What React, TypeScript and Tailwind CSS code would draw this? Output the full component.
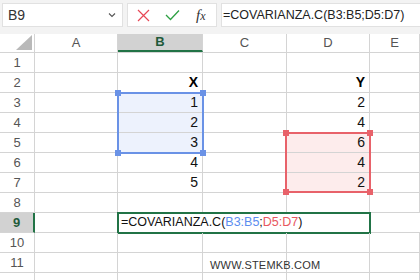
import React from "react";

const cols = ["A", "B", "C", "D", "E"];
const colW = ["w-[83px]", "w-[85px]", "w-[84px]", "w-[83px]", "w-[50px]"];

// cell values by row (1-based), index = column
const data: Record<number, (string | null)[]> = {
  2: [null, "X", null, "Y", null],
  3: [null, "1", null, "2", null],
  4: [null, "2", null, "4", null],
  5: [null, "3", null, "6", null],
  6: [null, "4", null, "4", null],
  7: [null, "5", null, "2", null],
};

const blueRows = [3, 4, 5];
const redRows = [5, 6, 7];

function Handle({ className }: { className: string }) {
  return <div className={"absolute w-[6px] h-[6px] " + className} />;
}

function Formula() {
  return (
    <span>
      =COVARIANZA.C(<span className="text-[#5b8def]">B3:B5</span>;
      <span className="text-[#e8575e]">D5:D7</span>)
    </span>
  );
}

export default function App() {
  const rows = Array.from({ length: 12 }, (_, i) => i + 1);

  return (
    <div className="relative w-[420px] h-[280px] overflow-hidden bg-white font-['Liberation_Sans',sans-serif] text-[#222]">
      {/* Formula bar */}
      <div className="flex h-[34px] items-start gap-[4px] bg-[#f3f3f3] pl-[2px] pt-[3px]">
        <div className="flex h-[24px] w-[121px] items-center justify-between border border-[#e1e1e1] bg-white pl-[5px] pr-[6px]">
          <span className="text-[14px] text-[#333]">B9</span>
          <svg width="8" height="6" viewBox="0 0 8 6" className="text-[#555]">
            <path d="M1 1.5 L4 4.5 L7 1.5" fill="none" stroke="currentColor" strokeWidth="1.1" />
          </svg>
        </div>
        <div className="flex h-[24px] w-[90px] items-center border border-[#e1e1e1] bg-white pl-[9px]">
          <svg width="13" height="13" viewBox="0 0 13 13">
            <path d="M1 1 L12 12 M12 1 L1 12" stroke="#e74856" strokeWidth="1.2" fill="none" />
          </svg>
          <svg width="15" height="12" viewBox="0 0 15 12" className="ml-[15px]">
            <path d="M1 6 L5.5 10.5 L14 1.5" stroke="#2ea043" strokeWidth="1.3" fill="none" />
          </svg>
          <span className="ml-[16px] font-['Liberation_Serif',serif] text-[15px] italic text-[#333]">
            f<span className="text-[12px]">x</span>
          </span>
        </div>
        <div className="flex h-[24px] flex-1 items-center border border-r-0 border-[#e1e1e1] bg-white pl-[1px] text-[12.5px] text-[#222]">
          =COVARIANZA.C(B3:B5;D5:D7)
        </div>
      </div>

      {/* Sheet grid */}
      <div className="relative">
        {/* Column headers */}
        <div className="flex h-[19px] border-b border-[#d4d4d4]">
          <div className="relative w-[35px] border-r border-[#d4d4d4]">
            <svg width="16" height="15" viewBox="0 0 16 15" className="absolute bottom-[2px] right-[2px]">
              <polygon points="16,0 16,15 0,15" fill="#b9b9b9" />
            </svg>
          </div>
          {cols.map((c, i) => (
            <div
              key={c}
              className={
                colW[i] +
                " flex items-center justify-center border-r border-[#d4d4d4] text-[13px] " +
                (c === "B"
                  ? "bg-[#d2d2d2] border-b-2 border-b-[#217346] font-bold text-[#1f5a3a]"
                  : "text-[#555]")
              }
            >
              {c}
            </div>
          ))}
        </div>

        {/* Rows */}
        {rows.map((r) => (
          <div key={r} className="flex h-[20px]">
            <div
              className={
                "flex w-[35px] items-center justify-center border-b border-[#d4d4d4] text-[13px] " +
                (r === 9
                  ? "bg-[#d2d2d2] border-r-2 border-r-[#217346] font-bold text-[#1f5a3a]"
                  : "border-r border-[#d4d4d4] text-[#555]")
              }
            >
              {r < 12 ? r : null}
            </div>
            {r === 9 ? (
              <>
                <div className={colW[0] + " border-b border-r border-[#d4d4d4]"} />
                <div className="relative flex w-[252px] items-center border-b border-r border-[#d4d4d4] pl-[3px] text-[12.5px] text-[#111]">
                  <div className="absolute -left-[1px] -top-[1px] h-[22px] w-[254px] border-2 border-[#217346]" />
                  <Formula />
                </div>
                <div className={colW[4] + " border-b border-[#d4d4d4]"} />
              </>
            ) : (
              cols.map((c, i) => {
                const v = data[r]?.[i];
                const blue = c === "B" && blueRows.includes(r);
                const red = c === "D" && redRows.includes(r);
                return (
                  <div
                    key={c}
                    className={
                      colW[i] +
                      " relative flex items-center justify-end border-b border-r border-[#d4d4d4] pr-[4px] text-[14px] " +
                      (blue ? "bg-[#edf2fd] " : red ? "bg-[#fdecec] " : "") +
                      (r === 2 ? "font-bold text-black" : "text-[#111]")
                    }
                  >
                    {v}
                    {c === "C" && r === 11 && (
                      <span className="absolute left-[7px] top-[4px] whitespace-nowrap text-[11px] tracking-[0.2px] text-[#333]">
                        WWW.STEMKB.COM
                      </span>
                    )}
                  </div>
                );
              })
            )}
          </div>
        ))}

        {/* Referenced range outlines */}
        <div className="pointer-events-none absolute left-[117px] top-[58px] h-[62px] w-[87px] border-2 border-[#6a92e6]">
          <Handle className="-left-[4px] -top-[4px] bg-[#6a92e6]" />
          <Handle className="-right-[4px] -top-[4px] bg-[#6a92e6]" />
          <Handle className="-left-[4px] -bottom-[4px] bg-[#6a92e6]" />
          <Handle className="-right-[4px] -bottom-[4px] bg-[#6a92e6]" />
        </div>
        <div className="pointer-events-none absolute left-[285px] top-[98px] h-[61px] w-[86px] border-2 border-[#e8626a]">
          <Handle className="-left-[4px] -top-[4px] bg-[#e8626a]" />
          <Handle className="-right-[4px] -top-[4px] bg-[#e8626a]" />
          <Handle className="-left-[4px] -bottom-[4px] bg-[#e8626a]" />
          <Handle className="-right-[4px] -bottom-[4px] bg-[#e8626a]" />
        </div>
      </div>
    </div>
  );
}
